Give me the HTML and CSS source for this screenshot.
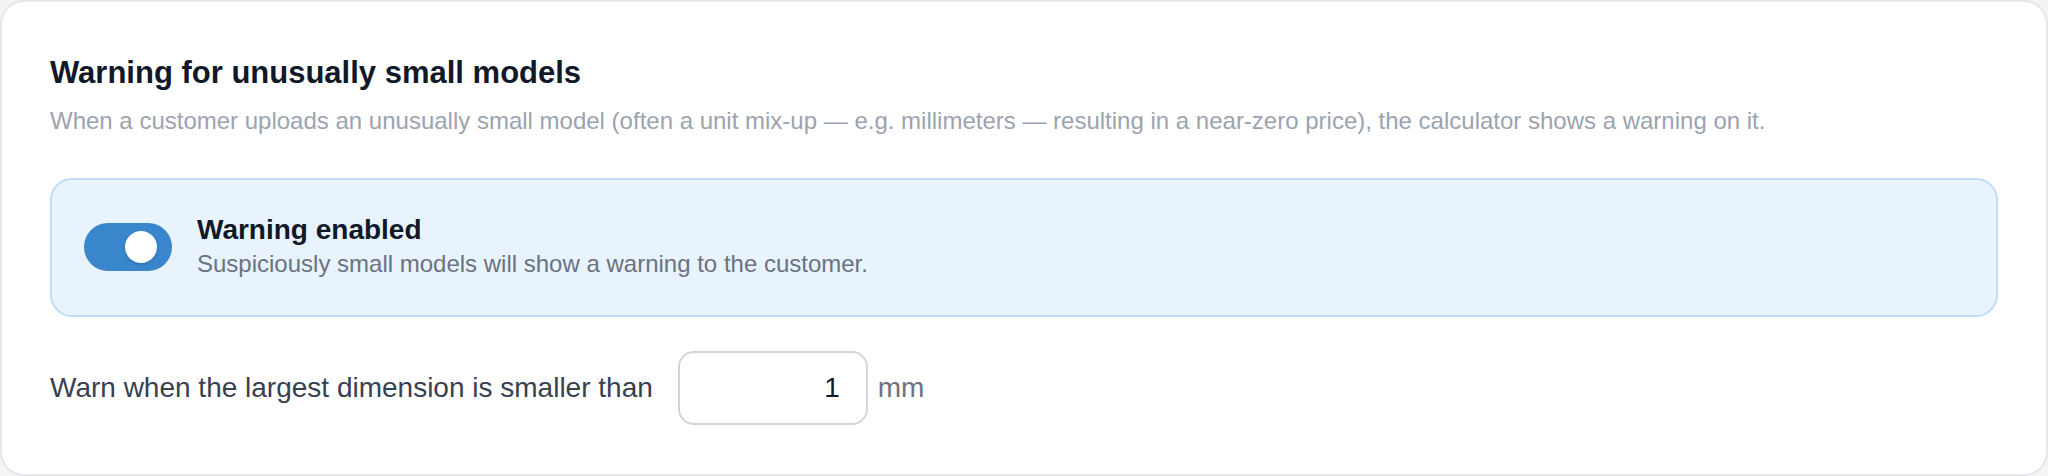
FILE: index.html
```html
<!DOCTYPE html>
<html lang="en">
<head>
<meta charset="utf-8">
<title>Warning for unusually small models</title>
<link rel="stylesheet" href="styles.css">
</head>
<body>
  <section class="card">
    <h2 class="card-title">Warning for unusually small models</h2>
    <p class="card-desc">When a customer uploads an unusually small model (often a unit mix-up — e.g. millimeters — resulting in a near-zero price), the calculator shows a warning on it.</p>

    <div class="toggle-panel">
      <span class="switch" role="switch" aria-checked="true"><span class="knob"></span></span>
      <div class="toggle-text">
        <div class="toggle-title">Warning enabled</div>
        <div class="toggle-sub">Suspiciously small models will show a warning to the customer.</div>
      </div>
    </div>

    <div class="threshold-row">
      <label class="threshold-label" for="minDim">Warn when the largest dimension is smaller than</label>
      <input id="minDim" class="threshold-input" type="text" value="1">
      <span class="unit">mm</span>
    </div>
  </section>
</body>
</html>
```

FILE: styles.css
```css
html, body {
  margin: 0;
  padding: 0;
}

body {
  background: #f3f4f6;
  font-family: "Liberation Sans", Arial, sans-serif;
  color: #111827;
}

.card {
  box-sizing: border-box;
  height: 476px;
  background: #ffffff;
  border: 2px solid #e5e7eb;
  border-radius: 24px;
  padding: 48px 48px 48px 48px;
}

.card-title {
  margin: 0;
  font-size: 31px;
  line-height: 1.5;
  font-weight: 700;
  color: #111827;
}

.card-desc {
  margin: 6px 0 0;
  font-size: 24px;
  line-height: 36px;
  color: #9ca3af;
}

.toggle-panel {
  margin-top: 39px;
  height: 139px;
  box-sizing: border-box;
  display: flex;
  align-items: center;
  gap: 25px;
  padding: 0 32px;
  background: #e8f3fd;
  border: 2px solid #c0dcf8;
  border-radius: 22px;
}

.switch {
  flex: none;
  position: relative;
  width: 88px;
  height: 48px;
  border-radius: 24px;
  background: #3a86cc;
}

.knob {
  position: absolute;
  top: 8px;
  left: 41px;
  width: 32px;
  height: 32px;
  border-radius: 50%;
  background: #ffffff;
  box-shadow: 0 2px 3px rgba(20, 60, 110, 0.25);
}

.toggle-text {
  display: flex;
  flex-direction: column;
  margin-top: 2px;
}

.toggle-title {
  font-size: 28px;
  font-weight: 700;
  line-height: 32px;
  color: #111827;
}

.toggle-sub {
  font-size: 24px;
  line-height: 36px;
  color: #6b7280;
}

.threshold-row {
  margin-top: 34px;
  display: flex;
  align-items: center;
}

.threshold-label {
  font-size: 28px;
  line-height: 38px;
  color: #374151;
}

.threshold-input {
  box-sizing: border-box;
  margin-left: 25px;
  width: 190px;
  height: 74px;
  padding: 0 26px;
  border: 2px solid #d1d5db;
  border-radius: 16px;
  font-family: "Liberation Sans", Arial, sans-serif;
  font-size: 28px;
  color: #111827;
  text-align: right;
  background: #ffffff;
  outline: none;
}

.unit {
  margin-left: 10px;
  font-size: 28px;
  line-height: 38px;
  color: #6b7280;
}
```
